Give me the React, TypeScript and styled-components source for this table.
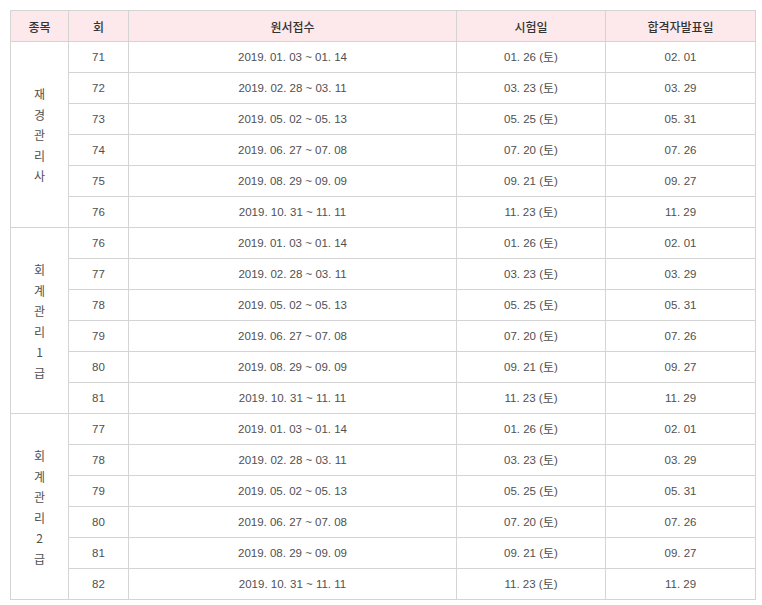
import React from "react";
import styled, { createGlobalStyle } from "styled-components";

const GlobalStyle = createGlobalStyle`
  body {
    margin: 0;
    background: #ffffff;
    font-family: "Noto Sans CJK KR", "Noto Sans", sans-serif;
  }
`;

const Wrapper = styled.div`
  padding: 10px 0 0 10px;
`;

const Table = styled.table`
  border-collapse: collapse;
  table-layout: fixed;
  width: 745px;
  font-size: 12px;
  color: #505050;
`;

const HeadCell = styled.th`
  height: 30px;
  padding: 0;
  border: 1px solid #d4d4d4;
  background: #fde9ec;
  color: #333333;
  font-weight: 500;
  text-align: center;
  vertical-align: middle;
`;

const Cell = styled.td`
  height: 30px;
  padding: 0;
  border: 1px solid #d4d4d4;
  text-align: center;
  vertical-align: middle;
  font-family: "Liberation Sans", "Noto Sans CJK KR", sans-serif;
  font-size: 11.5px;
  line-height: 16px;
`;

const Day = styled.span`
  font-family: "Noto Sans CJK KR", sans-serif;
  font-size: 12px;
  line-height: 16px;
  vertical-align: top;
`;

const GroupCell = styled(Cell)`
  line-height: 20.5px;
  font-size: 12px;
  font-family: "Noto Sans CJK KR", sans-serif;
  padding-top: 2px;
`;

interface Group {
  label: string[];
  start: number;
}

const groups: Group[] = [
  { label: ["재", "경", "관", "리", "사"], start: 71 },
  { label: ["회", "계", "관", "리", "1", "급"], start: 76 },
  { label: ["회", "계", "관", "리", "2", "급"], start: 77 },
];

const schedule = [
  { apply: "2019. 01. 03 ~ 01. 14", exam: "01. 26", result: "02. 01" },
  { apply: "2019. 02. 28 ~ 03. 11", exam: "03. 23", result: "03. 29" },
  { apply: "2019. 05. 02 ~ 05. 13", exam: "05. 25", result: "05. 31" },
  { apply: "2019. 06. 27 ~ 07. 08", exam: "07. 20", result: "07. 26" },
  { apply: "2019. 08. 29 ~ 09. 09", exam: "09. 21", result: "09. 27" },
  { apply: "2019. 10. 31 ~ 11. 11", exam: "11. 23", result: "11. 29" },
];

const App: React.FC = () => {
  return (
    <Wrapper>
      <GlobalStyle />
      <Table>
        <colgroup>
          <col style={{ width: 58 }} />
          <col style={{ width: 60 }} />
          <col style={{ width: 328 }} />
          <col style={{ width: 149 }} />
          <col style={{ width: 150 }} />
        </colgroup>
        <thead>
          <tr>
            <HeadCell>종목</HeadCell>
            <HeadCell>회</HeadCell>
            <HeadCell>원서접수</HeadCell>
            <HeadCell>시험일</HeadCell>
            <HeadCell>합격자발표일</HeadCell>
          </tr>
        </thead>
        <tbody>
          {groups.map((group) =>
            schedule.map((row, i) => (
              <tr key={`${group.start}-${i}`}>
                {i === 0 && (
                  <GroupCell rowSpan={schedule.length}>
                    {group.label.map((ch, j) => (
                      <React.Fragment key={j}>
                        {ch}
                        {j < group.label.length - 1 && <br />}
                      </React.Fragment>
                    ))}
                  </GroupCell>
                )}
                <Cell>{group.start + i}</Cell>
                <Cell>{row.apply}</Cell>
                <Cell>
                  {row.exam} (<Day>토</Day>)
                </Cell>
                <Cell>{row.result}</Cell>
              </tr>
            ))
          )}
        </tbody>
      </Table>
    </Wrapper>
  );
};

export default App;
